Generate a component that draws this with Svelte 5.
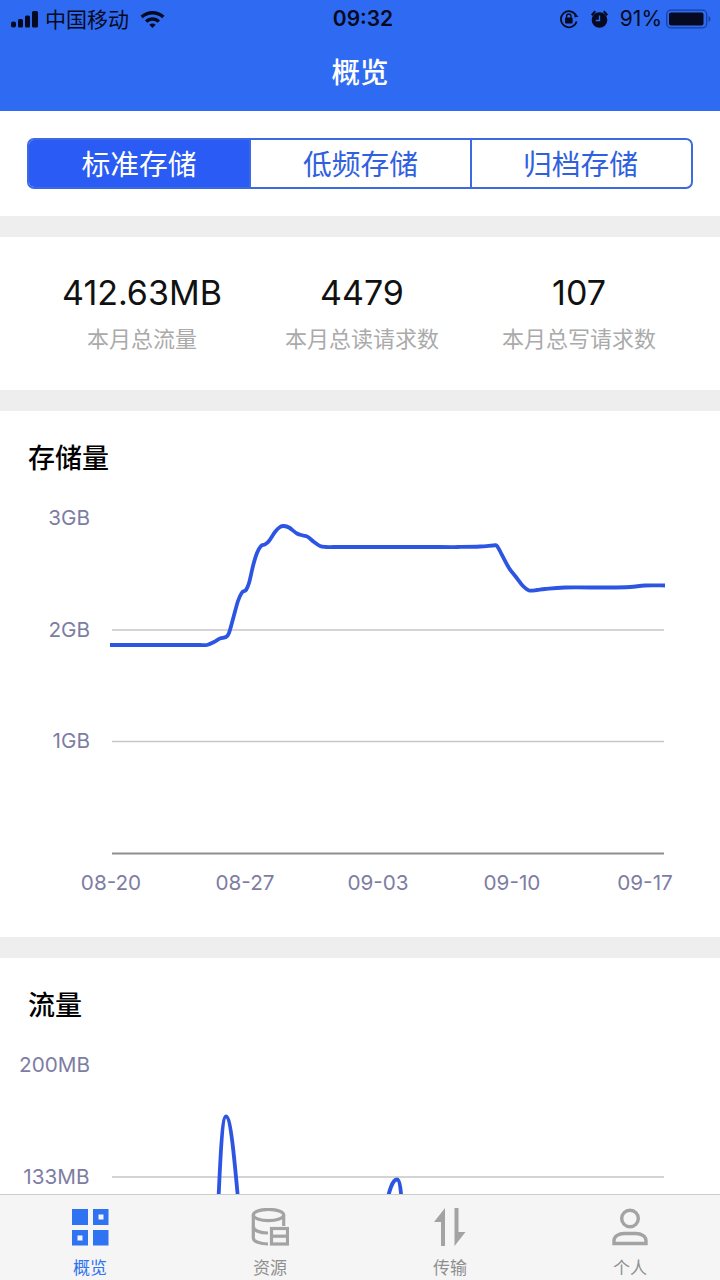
<script>
  const tabs = ['标准存储', '低频存储', '归档存储'];
  const stats = [
    { value: '412.63MB', label: '本月总流量' },
    { value: '4479', label: '本月总读请求数' },
    { value: '107', label: '本月总写请求数' }
  ];
  const dates = ['08-20', '08-27', '09-03', '09-10', '09-17'];
  const dateX = [111, 245, 378, 512, 645];

  const storagePts = [[110,645],[190,645],[200,645],[207,645],[214,642],[220,638.5],[226,637],[229,633],[233,619],[238,601],[242,592.5],[246,590],[249,583],[253,566],[257,553],[261,546],[265,544.5],[269,541],[275,532],[280,527],[284,526],[289,527.5],[297,533.5],[303,535.5],[308,537],[314,542],[320,546],[326,547],[334,547],[350,547],[440,547],[458,547],[480,546.5],[493,545.5],[497,546],[502,555],[509,568],[516,577],[523,586],[529,590.5],[537,590],[545,589],[565,587.5],[610,587.5],[630,587],[645,585.5],[665,585.5]];

  // catmull-rom through the points so the line stays soft
  function smooth(pts) {
    let d = `M${pts[0][0]} ${pts[0][1]}`;
    for (let i = 0; i < pts.length - 1; i++) {
      const p0 = pts[i - 1] || pts[i];
      const p1 = pts[i];
      const p2 = pts[i + 1];
      const p3 = pts[i + 2] || p2;
      const c1x = p1[0] + (p2[0] - p0[0]) / 6;
      const c1y = p1[1] + (p2[1] - p0[1]) / 6;
      const c2x = p2[0] - (p3[0] - p1[0]) / 6;
      const c2y = p2[1] - (p3[1] - p1[1]) / 6;
      d += ` C${c1x.toFixed(1)} ${c1y.toFixed(1)} ${c2x.toFixed(1)} ${c2y.toFixed(1)} ${p2[0]} ${p2[1]}`;
    }
    return d;
  }
  const storagePath = smooth(storagePts);
</script>

<div class="page">
  <header class="top">
    <div class="status">
      <div class="status-left">
        <svg class="signal" width="28" height="18" viewBox="0 0 28 18">
          <rect x="0" y="11.5" width="5" height="6" rx="2"/>
          <rect x="7" y="9" width="5" height="8.5" rx="1.5"/>
          <rect x="14" y="5.5" width="5" height="12" rx="1.5"/>
          <rect x="21" y="1" width="6" height="16.5" rx="1.5"/>
        </svg>
        <span class="carrier">中国移动</span>
        <svg class="wifi" width="25" height="18" viewBox="0 0 25 18">
          <path d="M0.5 5.8C7.2-0.6 17.8-0.6 24.5 5.8L22.2 8.2C16.8 3.2 8.2 3.2 2.8 8.2Z"/>
          <path d="M5 10.4C9.4 6.3 15.6 6.3 20 10.4L17.7 12.8C14.6 10 10.4 10 7.3 12.8Z"/>
          <path d="M9.3 14.8C11.2 13.2 13.8 13.2 15.7 14.8L12.5 18Z"/>
        </svg>
      </div>
      <div class="clock">09:32</div>
      <div class="status-right">
        <svg width="20" height="20" viewBox="0 0 20 20" fill="none">
          <path d="M17 6.5A8 8 0 1 0 17.6 12.5" stroke="#050a20" stroke-width="1.7"/>
          <path d="M19.6 7.5L15.6 8.4L15.4 4.5Z" fill="#050a20"/>
          <rect x="6" y="8.6" width="7.6" height="6" rx="1" fill="#050a20"/>
          <path d="M7.6 9V7.2a2.2 2.2 0 0 1 4.4 0V9" stroke="#050a20" stroke-width="1.3"/>
        </svg>
        <svg class="alarm" width="19" height="20" viewBox="0 0 19 20">
          <circle cx="9.5" cy="11" r="7.8" fill="#050a20"/>
          <path d="M1 5.5L4.5 1.5L6 3L2.5 7Z" fill="#050a20"/>
          <path d="M18 5.5L14.5 1.5L13 3L16.5 7Z" fill="#050a20"/>
          <path d="M9.5 6.5V11.5H5.8" fill="none" stroke="#2f6bf2" stroke-width="1.3"/>
        </svg>
        <span class="pct">91%</span>
        <svg class="battery" width="45" height="20" viewBox="0 0 45 20">
          <rect x="0.7" y="1.2" width="40" height="17.6" rx="4" fill="none" stroke="#1a3fa0" stroke-width="1.3"/>
          <rect x="3" y="3.4" width="34.5" height="13.2" rx="2" fill="#050a20"/>
          <path d="M42.6 7v6c1.2-.4 1.8-1.6 1.8-3s-.6-2.6-1.8-3z" fill="#1a3fa0"/>
        </svg>
      </div>
    </div>
    <h1 class="title">概览</h1>
  </header>

  <section class="tabs-wrap">
    <div class="tabs">
      {#each tabs as tab, i}
        <div class="tab" class:active={i === 0}>{tab}</div>
      {/each}
    </div>
  </section>

  <section class="stats">
    {#each stats as s}
      <div class="stat">
        <div class="stat-value">{s.value}</div>
        <div class="stat-label">{s.label}</div>
      </div>
    {/each}
  </section>

  <section class="card first">
    <h2>存储量</h2>
    <svg class="chart" width="720" height="490" viewBox="0 411 720 490">
      <text class="axis" x="90" y="525" text-anchor="end">3GB</text>
      <text class="axis" x="90" y="637" text-anchor="end">2GB</text>
      <text class="axis" x="90" y="748" text-anchor="end">1GB</text>
      <line class="grid" x1="112" x2="664" y1="630" y2="630"/>
      <line class="grid" x1="112" x2="664" y1="741.5" y2="741.5"/>
      <line class="base" x1="112" x2="664" y1="853.5" y2="853.5"/>
      {#each dates as d, i}
        <text class="axis" x={dateX[i]} y="890" text-anchor="middle">{d}</text>
      {/each}
      <path class="curve" d={storagePath}/>
    </svg>
  </section>

  <section class="card">
    <h2>流量</h2>
    <svg class="chart short" width="720" height="200" viewBox="0 1040 720 200">
      <text class="axis" x="90" y="1072" text-anchor="end">200MB</text>
      <text class="axis" x="89.5" y="1184" text-anchor="end">133MB</text>
      <line class="grid" x1="112" x2="664" y1="1177" y2="1177"/>
      <path class="curve" d="M218 1210C220 1165 222 1116.5 226 1116.5C231 1116.5 235 1165 239 1210"/>
      <path class="curve" d="M386 1205C389 1192 392 1179.5 397 1179.5C400 1179.5 401 1192 402 1205"/>
    </svg>
  </section>

  <nav class="tabbar">
    <div class="item on">
      <svg width="38" height="38" viewBox="0 0 38 38">
        <path d="M1 1H17V17H1Z" fill="#2f73f2"/>
        <path fill-rule="evenodd" d="M22 1H37.5V17H22ZM27.5 6.5V11.5H32.5V6.5Z" fill="#2f73f2"/>
        <path fill-rule="evenodd" d="M1 22H17V37.5H1ZM6.5 27.5V32.5H11.5V27.5Z" fill="#2f73f2"/>
        <path d="M22 22H37.5V37.5H22Z" fill="#2f73f2"/>
      </svg>
      <span>概览</span>
    </div>
    <div class="item">
      <svg width="38" height="38" viewBox="0 0 38 38" fill="none" stroke="#a3a3a3" stroke-width="3.2">
        <ellipse cx="17.5" cy="7" rx="15.2" ry="5.6"/>
        <path d="M2.3 7V30C2.3 33.5 9 36 17 36"/>
        <path d="M32.7 7V18"/>
        <path d="M2.3 18.5C2.3 22.5 9 25 17 25"/>
        <rect x="20.5" y="20.5" width="16" height="15.5" fill="#f5f5f5" stroke="none"/>
        <rect x="20.5" y="20.5" width="16" height="15.5"/>
        <path d="M20.5 28.2H36.5"/>
      </svg>
      <span>资源</span>
    </div>
    <div class="item">
      <svg width="38" height="38" viewBox="0 0 38 38" fill="#a3a3a3">
        <path d="M14 0L3 14H10V38H14Z"/>
        <path d="M23.5 0H27.5V24H34.5L23.5 38Z"/>
      </svg>
      <span>传输</span>
    </div>
    <div class="item">
      <svg width="38" height="38" viewBox="0 0 38 38" fill="none" stroke="#a3a3a3" stroke-width="3.4">
        <circle cx="19" cy="10.5" r="8.3"/>
        <path d="M3 35.5V32.5C3 28 8 25.5 13 25.5H25C30 25.5 35 28 35 32.5V35.5Z"/>
      </svg>
      <span>个人</span>
    </div>
  </nav>
</div>

<style>
  :global(body) {
    margin: 0;
    background: #fff;
  }

  .page {
    width: 720px;
    height: 1280px;
    overflow: hidden;
    position: relative;
    background: #eee;
    font-family: Inter, "Noto Sans CJK SC", sans-serif;
  }

  .top {
    height: 111px;
    background: #2f6bf2;
  }

  .status {
    height: 37px;
    display: grid;
    grid-template-columns: 1fr auto 1fr;
    align-items: center;
    color: #050a20;
    font-size: 21px;
    padding: 0 9px 0 11px;
    box-sizing: border-box;
  }

  .status-left, .status-right {
    display: flex;
    align-items: center;
  }

  .status-right {
    justify-content: flex-end;
  }

  .signal {
    fill: #050a20;
  }

  .carrier {
    margin-left: 6px;
    font-family: "Noto Sans CJK SC", sans-serif;
    line-height: 1;
  }

  .wifi {
    fill: #050a20;
    margin-left: 11px;
  }

  .clock {
    font-weight: 600;
    margin-left: 4px;
  }

  .alarm {
    margin-left: 11px;
  }

  .pct {
    margin-left: 11px;
    margin-right: 4px;
  }

  .title {
    margin: 0;
    color: #fff;
    font-size: 28.5px;
    font-weight: 500;
    line-height: 40px;
    text-align: center;
    padding-top: 16px;
  }

  .tabs-wrap {
    height: 105px;
    background: #fff;
    padding: 27px 27px 0;
    box-sizing: border-box;
  }

  .tabs {
    display: grid;
    grid-template-columns: 220px 221px 221px;
    height: 51px;
    box-sizing: border-box;
    border: 2px solid #3c6ae0;
    border-radius: 7px;
    overflow: hidden;
  }

  .tab {
    color: #3060e0;
    font-size: 28.8px;
    line-height: 49px;
    height: 47px;
    text-align: center;
    border-left: 2px solid #3c6ae0;
  }

  .tab:last-child {
    padding-right: 2px;
  }

  .tab.active {
    border-left: 0;
    background: #2a5bf5;
    color: #fff;
  }

  .stats {
    margin-top: 21px;
    height: 153px;
    background: #fff;
    display: grid;
    grid-template-columns: 220px 220px 214px;
    padding: 33px 32px 0;
    box-sizing: border-box;
    text-align: center;
  }

  .stat-value {
    color: #111;
    font-size: 34px;
    line-height: 44px;
    padding-top: 1px;
  }

  .stat-label {
    margin-top: 5px;
    color: #aaa;
    font-size: 22px;
    line-height: 34px;
    font-family: "Noto Sans CJK SC", sans-serif;
  }

  .card {
    margin-top: 21px;
    background: #fff;
  }

  .card.first {
    height: 526px;
  }

  .card h2 {
    margin: 0;
    font-size: 27px;
    font-weight: 500;
    color: #000;
    line-height: 38px;
    padding: 29px 0 0 28px;
  }

  .chart {
    display: block;
    margin-top: -67px;
    overflow: visible;
  }

  .chart.short {
    margin-top: 15px;
  }

  .axis {
    font-size: 20.7px;
    fill: #7d7da3;
  }

  .grid {
    stroke: #c6c6c6;
    stroke-width: 1.5;
  }

  .base {
    stroke: #8e8e8e;
    stroke-width: 2;
  }

  .curve {
    fill: none;
    stroke: #2d55e3;
    stroke-width: 3.8;
    stroke-linejoin: round;
  }

  .tabbar {
    position: absolute;
    left: 0;
    right: 0;
    bottom: 0;
    height: 86px;
    box-sizing: border-box;
    border-top: 1px solid #ccc;
    background: #f5f5f5;
    display: grid;
    grid-template-columns: repeat(4, 180px);
    padding-top: 13px;
  }

  .item {
    display: flex;
    flex-direction: column;
    align-items: center;
    color: #8f8f8f;
    font-size: 17px;
    line-height: 24px;
    font-family: "Noto Sans CJK SC", sans-serif;
  }

  .item svg {
    display: block;
    margin-bottom: 9px;
  }

  .item.on {
    color: #2f73f2;
  }
</style>
